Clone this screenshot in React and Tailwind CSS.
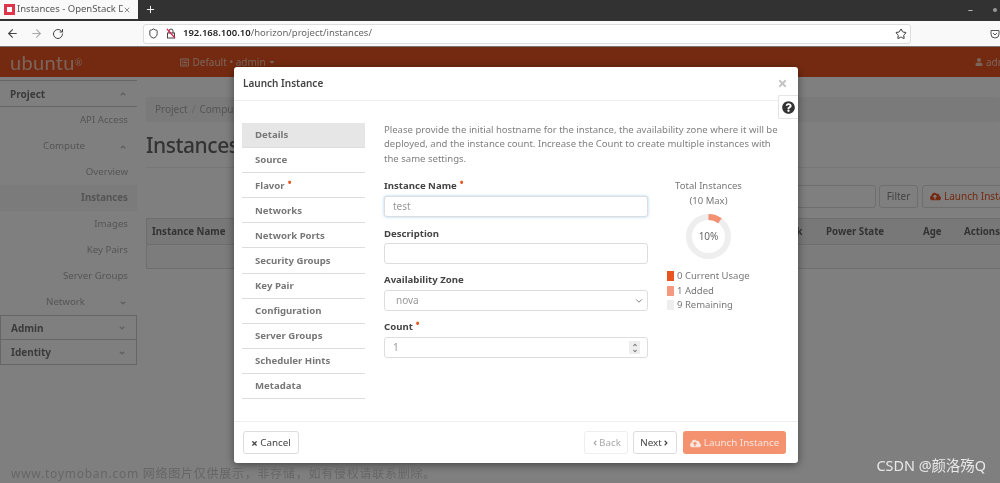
import React from "react";
import { ArrowLeft, ArrowRight, RotateCw, Shield, Star, Plus, X, ChevronDown } from "lucide-react";
import { FaTimes, FaCloudUploadAlt, FaUser, FaQuestionCircle, FaAngleUp, FaAngleDown, FaAngleLeft, FaAngleRight, FaRegListAlt, FaCaretDown } from "react-icons/fa";

const font = { fontFamily: '"Noto Sans","Noto Sans CJK SC",sans-serif' };

function Req() {
  return <span className="relative -top-[4px] ml-[3px] text-[10px] leading-none text-[#e95420]">•</span>;
}

function Chrome() {
  return (
    <div className="bg-[#f9f9fa]">
      <div className="flex h-[21px] bg-[#333232] text-white">
        <div className="flex h-[19px] w-[138px] items-center bg-[#f9f9fa] pl-[4px] text-[#555]">
          <div className="flex h-[11px] w-[11px] shrink-0 items-center justify-center bg-[#e0344a]">
            <div className="h-[5px] w-[5px] bg-white" />
          </div>
          <span className="ml-[2px] w-[106px] shrink-0 overflow-hidden text-[9.5px] whitespace-nowrap">Instances - OpenStack Da</span>
          <X size={8} className="shrink-0" />
        </div>
        <div className="ml-[7px] flex h-[19px] items-center">
          <Plus size={11} />
        </div>
        <div className="ml-auto flex h-[19px] items-center pr-[3px]">
          <span className="text-[10px] text-[#ccc]">–</span>
          <span className="ml-[20px] h-[4px] w-[4px] rounded-full bg-[#999]" />
        </div>
      </div>
      <div className="flex h-[26px] items-center border-b border-[#777]">
        <ArrowLeft size={13} className="ml-[6px] text-[#444]" />
        <ArrowRight size={13} className="ml-[11px] text-[#aaa]" />
        <RotateCw size={12} className="ml-[9px] text-[#444]" />
        <div className="ml-[79px] flex h-[20px] w-[768px] items-center rounded-[3px] border border-[#ddd] bg-white pr-[3px] pl-[4px]">
          <Shield size={11} className="text-[#333]" />
          <svg width="10" height="11" viewBox="0 0 10 11" className="ml-[7px]">
            <rect x="1.5" y="5" width="7" height="5" fill="none" stroke="#444" />
            <path d="M3 5V3a2 2 0 0 1 4 0v2" fill="none" stroke="#444" />
            <path d="M1 1l8 9" stroke="#e22850" strokeWidth="1.3" />
          </svg>
          <span className="ml-[7px] text-[9.5px] whitespace-nowrap text-[#666]">
            <b className="font-semibold text-[#222]">192.168.100.10</b>/horizon/project/instances/
          </span>
          <Star size={12} className="ml-auto text-[#333]" />
        </div>
        <svg width="10" height="10" viewBox="0 0 10 10" className="ml-[79px]">
          <path d="M1 1.5h8v3.5a4 4 0 0 1-8 0z" fill="none" stroke="#555" />
          <path d="M3 4l2 2 2-2" fill="none" stroke="#555" />
        </svg>
      </div>
    </div>
  );
}

function Side({ children, right, cls = "" }) {
  return (
    <div className={`flex h-[26px] items-center justify-end pt-[1px] text-[9.7px] text-[#aaa] ${cls}`}>
      {right ? (
        <>
          <span className="mr-[34px]">{children}</span>
          <span className="mr-[10px] text-[#bbb]">{right}</span>
        </>
      ) : (
        <span className="mr-[9px]">{children}</span>
      )}
    </div>
  );
}

function SideHead({ children, up, cls }) {
  return (
    <div className={`flex items-center justify-between px-[10px] pt-[1px] text-[10px] font-bold text-[#777] ${cls}`}>
      {children}
      {up ? <FaAngleUp size={8} className="text-[#bbb]" /> : <FaAngleDown size={8} className="text-[#bbb]" />}
    </div>
  );
}

function Page() {
  return (
    <div className="h-full bg-white">
      <div className="flex h-[30px] items-center bg-[#e95420] text-white">
        <span className="ml-[10px] text-[20px] leading-none tracking-[0.3px] text-[#f4c9b8]" style={{ fontFamily: '"Lato",sans-serif' }}>
          ubuntu<sup className="text-[9px]">®</sup>
        </span>
        <FaRegListAlt size={9} className="ml-[98px] text-[#f4c9b8]" />
        <span className="ml-[3px] text-[10px] text-[#f4c9b8]">Default • admin</span>
        <FaCaretDown size={8} className="ml-[2px] text-[#f4c9b8]" />
        <FaUser size={8} className="ml-auto text-[#f4c9b8]" />
        <span className="ml-[3px] w-[14px] overflow-hidden text-[10px] text-[#f4c9b8]">adm</span>
      </div>
      <div className="flex">
        <div className="mt-[3px] w-[137px] shrink-0">
          <SideHead up cls="h-[27px] border-y border-[#ccc]">Project</SideHead>
          <Side>API Access</Side>
          <Side right={<FaAngleUp size={8} />}>Compute</Side>
          <Side>Overview</Side>
          <Side cls="bg-[#f7f7f7] font-bold">Instances</Side>
          <Side>Images</Side>
          <Side>Key Pairs</Side>
          <Side>Server Groups</Side>
          <Side right={<FaAngleDown size={8} />}>Network</Side>
          <SideHead cls="h-[25px] border border-[#ccc]">Admin</SideHead>
          <SideHead cls="h-[25px] border border-t-0 border-[#ccc]">Identity</SideHead>
        </div>
        <div className="ml-[9px] min-w-0 flex-1 overflow-hidden">
          <div className="mt-[20px] flex h-[25px] items-center rounded-[3px] bg-[#f5f5f5] pl-[9px] text-[10px] text-[#aaa]">
            Project <span className="mx-[4px] text-[#ccc]">/</span> Compute
          </div>
          <div className="mt-[6px] border-b border-[#eee] pb-[5px] text-[21px] leading-[34px] font-medium tracking-[-0.45px] text-[#666]">Instances</div>
          <div className="mt-[17px] flex h-[23px] w-[1000px] items-stretch">
            <div className="ml-[430px] w-[300px] rounded-[3px] border border-[#ddd]" />
            <div className="ml-[3px] flex w-[39px] items-center justify-center rounded-[3px] border border-[#ddd] text-[10px] text-[#888]">Filter</div>
            <div className="ml-[4px] flex w-[120px] items-center rounded-[3px] border border-[#ddd] pl-[7px] text-[10px] whitespace-nowrap text-[#e95420]">
              <FaCloudUploadAlt size={11} className="mr-[3px]" />
              Launch Instance
            </div>
          </div>
          <div className="mt-[10px] flex h-[27px] w-[900px] items-center border border-[#ddd] bg-[#f1f1f1] pt-[1px] pl-[5px] text-[9.7px] font-bold whitespace-nowrap text-[#666]">
            <span className="w-[629px]">Instance Name</span>
            <span className="w-[45px]">Task</span>
            <span className="w-[97px]">Power State</span>
            <span className="w-[41px]">Age</span>
            <span>Actions</span>
          </div>
          <div className="h-[24px] w-[900px] border border-t-0 border-[#ddd] bg-[#f9f9f9]" />
        </div>
      </div>
    </div>
  );
}

const steps = ["Details", "Source", "Flavor", "Networks", "Network Ports", "Security Groups", "Key Pair", "Configuration", "Server Groups", "Scheduler Hints", "Metadata"];

function Label({ children, req, cls = "" }) {
  return (
    <div className={`flex h-[17px] items-center text-[9.6px] leading-none font-bold text-[#444] ${cls}`}>
      {children}
      {req && <Req />}
    </div>
  );
}

const boxCls = "flex h-[21px] w-[264px] items-center rounded-[3px] border border-[#ddd] bg-white pl-[8px] text-[10px] text-[#999]";

function Modal() {
  return (
    <div className="absolute top-[20px] left-[234px] flex h-[396px] w-[564px] flex-col rounded-[3px] bg-white shadow-[0_2px_8px_rgba(0,0,0,0.45)]">
      <div className="flex h-[34px] shrink-0 items-center justify-between border-b border-[#eee] pr-[10px] pl-[9px]">
        <span className="text-[10px] font-semibold text-[#444]">Launch Instance</span>
        <FaTimes size={11} className="text-[#c4c4c4]" />
      </div>
      <div className="absolute top-[28px] right-0 flex h-[24px] w-[20px] items-center justify-center rounded-l-[2px] border border-r-0 border-[#e4e4e4] bg-white">
        <FaQuestionCircle size={13} className="text-[#333]" />
      </div>
      <div className="flex min-h-0 flex-1">
        <div className="mt-[22px] ml-[8px] w-[123px] shrink-0">
          {steps.map((s, i) => (
            <div key={s} className={`flex h-[25.1px] items-center border-b border-[#ddd] pt-[1px] pl-[13px] text-[9.6px] font-bold text-[#777] ${i === 0 ? "bg-[#e6e6e6]" : ""}`}>
              {s}
              {s === "Flavor" && <Req />}
            </div>
          ))}
        </div>
        <div className="mt-[22px] ml-[19px] w-[396px]">
          <p className="text-[9.55px] leading-[14.4px] text-[#808080]">
            Please provide the initial hostname for the instance, the availability zone where it will be deployed, and the instance count. Increase the Count to create multiple instances with the same settings.
          </p>
          <div className="mt-[11px] flex">
            <div className="w-[264px]">
              <Label req>Instance Name</Label>
              <div className={`${boxCls} mt-[2px] border-[#8cc4ee] shadow-[0_0_3px_rgba(102,175,233,0.6)]`}>test</div>
              <Label cls="mt-[8px]">Description</Label>
              <div className={`${boxCls} mt-[1px]`} />
              <Label cls="mt-[7px]">Availability Zone</Label>
              <div className={`${boxCls} mt-[2px] justify-between pr-[3px] pl-[11px]`}>
                nova
                <ChevronDown size={10} className="text-[#666]" />
              </div>
              <Label req cls="mt-[7px]">Count</Label>
              <div className={`${boxCls} mt-[2px] justify-between pr-[7px]`}>
                1
                <div className="flex h-[13px] w-[11px] flex-col items-center justify-center bg-[#eee] text-[#777]">
                  <FaAngleUp size={6} />
                  <FaAngleDown size={6} />
                </div>
              </div>
            </div>
            <div className="mt-[2px] ml-[19px] w-[83px]">
              <div className="text-center text-[9.5px] leading-[14.5px] text-[#777]">
                Total Instances
                <br />
                (10 Max)
              </div>
              <div className="relative mt-[6px] flex justify-center">
                <svg width="45" height="45" viewBox="0 0 45 45">
                  <circle cx="22.5" cy="22.5" r="19.5" fill="none" stroke="#eeeeee" strokeWidth="6" />
                  <path d="M22.5 3A19.5 19.5 0 0 1 33.96 6.72" fill="none" stroke="#f29070" strokeWidth="6" />
                </svg>
                <span className="absolute inset-0 flex items-center justify-center text-[10px] text-[#666]">10%</span>
              </div>
              <div className="mt-[10px] text-[9.5px] leading-[14.5px] text-[#777]">
                {[["bg-[#e95420]", "0 Current Usage"], ["bg-[#f49a80]", "1 Added"], ["bg-[#eeeeee]", "9 Remaining"]].map(([c, t]) => (
                  <div key={t} className="flex items-center whitespace-nowrap">
                    <span className={`mr-[3px] h-[10px] w-[7px] shrink-0 ${c}`} />
                    {t}
                  </div>
                ))}
              </div>
            </div>
          </div>
        </div>
      </div>
      <div className="flex h-[42px] shrink-0 items-center border-t border-[#eee] pr-[12px] pl-[9px] text-[9.8px] leading-none">
        <div className="flex h-[23px] w-[56px] items-center justify-center rounded-[3px] border border-[#ddd] pt-[1px] text-[#444]">
          <FaTimes size={7} className="mr-[2px]" />
          Cancel
        </div>
        <div className="ml-auto flex h-[23px] w-[44px] items-center justify-center rounded-[3px] border border-[#eee] pt-[1px] text-[#aaa]">
          <FaAngleLeft size={8} />
          Back
        </div>
        <div className="ml-[5px] flex h-[23px] w-[44px] items-center justify-center rounded-[3px] border border-[#ddd] pt-[1px] text-[#444]">
          Next
          <FaAngleRight size={8} />
        </div>
        <div className="ml-[6px] flex h-[23px] w-[103px] items-center justify-center rounded-[3px] bg-[#f4916f] pt-[1px] text-[#fbe4dc]">
          <FaCloudUploadAlt size={11} className="mr-[3px]" />
          Launch Instance
        </div>
      </div>
    </div>
  );
}

export default function App() {
  return (
    <div className="flex h-[483px] w-[1000px] flex-col overflow-hidden blur-[0.5px]" style={font}>
      <Chrome />
      <div className="relative min-h-0 flex-1 overflow-hidden">
        <Page />
        <div className="absolute inset-0 bg-black/50" />
        <Modal />
        <div className="absolute bottom-[0px] left-[11px] text-[12px] tracking-[0.75px] whitespace-nowrap text-[#666]">
          www.toymoban.com 网络图片仅供展示，非存储，如有侵权请联系删除。
        </div>
        <div className="absolute right-[14px] bottom-[8px] text-[14.4px] leading-[18px] whitespace-nowrap text-[#e8e8e8]">CSDN @颜洛殇Q</div>
      </div>
    </div>
  );
}
